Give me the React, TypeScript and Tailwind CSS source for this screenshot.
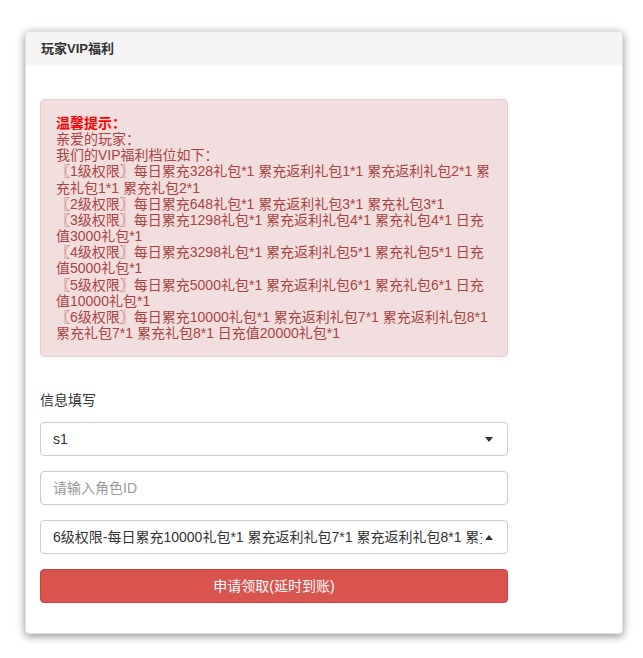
import React from "react";

const lines = [
  "〖1级权限〗每日累充328礼包*1 累充返利礼包1*1 累充返利礼包2*1 累充礼包1*1 累充礼包2*1",
  "〖2级权限〗每日累充648礼包*1 累充返利礼包3*1 累充礼包3*1",
  "〖3级权限〗每日累充1298礼包*1 累充返利礼包4*1 累充礼包4*1 日充值3000礼包*1",
  "〖4级权限〗每日累充3298礼包*1 累充返利礼包5*1 累充礼包5*1 日充值5000礼包*1",
  "〖5级权限〗每日累充5000礼包*1 累充返利礼包6*1 累充礼包6*1 日充值10000礼包*1",
  "〖6级权限〗每日累充10000礼包*1 累充返利礼包7*1 累充返利礼包8*1 累充礼包7*1 累充礼包8*1 日充值20000礼包*1",
];

export default function App() {
  return (
    <div
      className="min-h-[658px] bg-white pt-[31px] pl-[25px]"
      style={{ fontFamily: '"Liberation Sans", "Noto Sans CJK SC", sans-serif' }}
    >
      <div className="w-[598px] rounded-[4px] border border-[#e3e3e3] bg-white shadow-[0_2px_8px_rgba(0,0,0,0.45)] overflow-hidden">
        <div className="h-[33px] bg-[#f5f5f5] px-[15px] flex items-center text-[13px] font-bold text-[#333]">
          玩家VIP福利
        </div>
        <div className="px-[14px] pt-[34px] pb-[30px]">
          <div className="w-[468px] rounded-[4px] border border-[#ebccd1] bg-[#f2dede] p-[15px] text-[14px] leading-[16.15px] text-[#a94442]">
            <div className="font-bold text-[#ff0000]">温馨提示：</div>
            <div>亲爱的玩家：</div>
            <div>我们的VIP福利档位如下：</div>
            {lines.map((l, i) => (
              <div key={i}>{l}</div>
            ))}
          </div>

          <div className="mt-[33px] text-[14px] leading-[20px] text-[#333]">信息填写</div>

          <div className="mt-[12px] flex flex-col gap-[15px] w-[468px]">
            <div className="h-[34px] rounded-[4px] border border-[#ccc] bg-white flex items-center pl-[12px] pr-[14px] text-[14px] text-[#333]">
              <div className="flex-1">s1</div>
              <div className="w-0 h-0 border-l-[4px] border-r-[4px] border-t-[5px] border-l-transparent border-r-transparent border-t-[#333]" />
            </div>
            <div className="h-[34px] rounded-[4px] border border-[#ccc] bg-white flex items-center px-[12px] text-[14px] text-[#999]">
              请输入角色ID
            </div>
            <div className="h-[34px] rounded-[4px] border border-[#ccc] bg-white flex items-center pl-[12px] pr-[14px] text-[14px] text-[#333]">
              <div className="flex-1 overflow-hidden whitespace-nowrap mr-[3px]">
                6级权限-每日累充10000礼包*1 累充返利礼包7*1 累充返利礼包8*1 累充礼包7*1 累充礼包8*1 日充值20000礼包*1
              </div>
              <div className="w-0 h-0 border-l-[4px] border-r-[4px] border-b-[5px] border-l-transparent border-r-transparent border-b-[#333]" />
            </div>
            <div className="h-[34px] rounded-[4px] border border-[#d43f3a] bg-[#d9534f] flex items-center justify-center text-[14px] text-white">
              申请领取(延时到账)
            </div>
          </div>
        </div>
      </div>
    </div>
  );
}
